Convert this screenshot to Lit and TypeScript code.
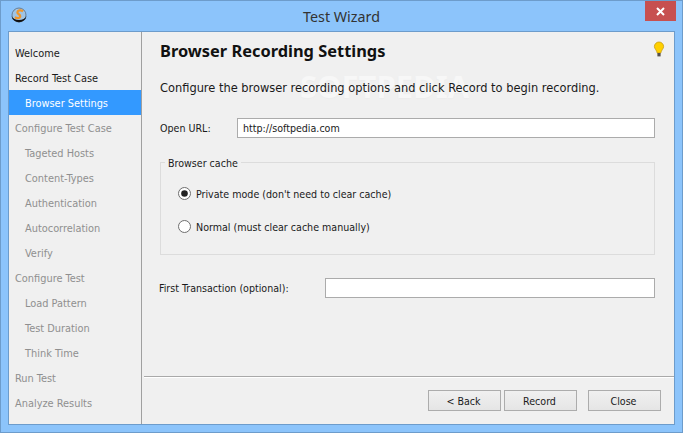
import { LitElement, html, css } from "lit";
import { customElement } from "lit/decorators.js";

const NAV: [string, number, string][] = [
  ["Welcome", 0, "on"], ["Record Test Case", 0, "on"], ["Browser Settings", 1, "sel"],
  ["Configure Test Case", 0, ""], ["Tageted Hosts", 1, ""], ["Content-Types", 1, ""],
  ["Authentication", 1, ""], ["Autocorrelation", 1, ""], ["Verify", 1, ""],
  ["Configure Test", 0, ""], ["Load Pattern", 1, ""], ["Test Duration", 1, ""],
  ["Think Time", 1, ""], ["Run Test", 0, ""], ["Analyze Results", 0, ""],
];

@customElement("app-root")
export class AppRoot extends LitElement {
  static styles = css`
    :host { display: block; width: 683px; height: 433px; font-family: "DejaVu Sans", sans-serif; font-stretch: condensed; font-size: 10.6px; color: #1a1a1a; }
    * { box-sizing: border-box; }
    .win { width: 683px; height: 433px; background: #8cc4fb; border: 1px solid #6d9ccb; display: flex; flex-direction: column; position: relative; }
    .title { height: 30px; flex: none; display: flex; align-items: center; justify-content: center; font-family: "Noto Sans", sans-serif; font-stretch: normal; font-size: 14.3px; color: #333; position: relative; padding-top: 1px; }
    .logo { position: absolute; left: 9px; top: 6px; }
    .close { position: absolute; right: 6px; top: 0; width: 31px; height: 20px; background: #c75050; display: flex; align-items: center; justify-content: center; }
    .client { flex: 1; margin: 0 7px 7px 7px; background: #f0f0f0; border: 1px solid #6d9ccb; display: flex; min-height: 0; }
    .side { width: 133px; flex: none; border-right: 1px solid #a0a0a0; padding-top: 8px; font-size: 10.9px; }
    .item { height: 25px; line-height: 27px; padding-left: 6px; color: #8f8f8f; white-space: nowrap; }
    .item.sub { padding-left: 16px; }
    .item.on { color: #1a1a1a; }
    .item.sel { background: #3399ff; color: #fff; }
    .main { flex: 1; display: flex; flex-direction: column; position: relative; min-width: 0; }
    .body { flex: 1; padding: 7px 19px 0 17px; display: flex; flex-direction: column; position: relative; }
    h1 { margin: 0 0 0 1px; font-family: "Noto Sans", sans-serif; font-stretch: normal; font-size: 16.4px; line-height: 24px; font-weight: 700; color: #111; }
    .bulb { position: absolute; right: 9px; top: 9px; z-index: 1; }
    .intro { margin: 16px 0 0 1px; font-size: 12.7px; line-height: 18px; color: #1a1a1a; white-space: nowrap; }
    .row { display: flex; align-items: center; height: 20px; }
    .url { margin-top: 21px; }
    .url label { width: 78px; padding-left: 1px; }
    .inp { flex: 1; height: 20px; background: #fff; border: 1px solid #ababab; padding: 0 5px; line-height: 18px; }
    fieldset { margin: 24px 0 0 1px; padding: 0; height: 93px; border: 1px solid #dcdcdc; position: relative; }
    .legend { position: absolute; left: 4px; top: -8px; background: #f0f0f0; padding: 0 3px; line-height: 16px; }
    .radios { display: flex; flex-direction: column; gap: 17px; padding: 22px 0 0 17px; }
    .radio { display: flex; align-items: center; gap: 5px; height: 16px; }
    .radio span { padding-top: 2px; }
    .first { margin-top: 23px; }
    .first label { width: 166px; }
    .wm { position: absolute; left: 158px; top: 39px; line-height: 30px; font-family: "Noto Sans", sans-serif; font-stretch: normal; font-size: 31px; font-weight: 700; color: #f7f7f7; text-shadow: 0 1px 1px #ececec; }
    .foot { height: 48px; flex: none; margin-left: 2px; border-top: 1px solid #a9a9a9; box-shadow: inset 0 1px 0 #fff; display: flex; justify-content: flex-end; align-items: flex-start; padding: 13px 13px 0 0; }
    button { width: 73px; height: 21px; font: inherit; font-stretch: condensed; color: #1a1a1a; padding: 0 2px 0 0; border: 1px solid #acacac; background: linear-gradient(#f0f0f0, #e5e5e5); margin-left: 3px; }
    button.close-btn { margin-left: 11px; }
  `;

  render() {
    return html`<div class="win">
      <div class="title">
        <svg class="logo" width="18" height="18" viewBox="0 0 18 18">
          <circle cx="9" cy="8" r="7" fill="#9fc4e4" stroke="#5e6b78" stroke-width=".8"/>
          <path d="M1.5 9 a7.6 7.6 0 0 0 15 0 a8 6 0 0 1 -15 0z" fill="#111"/>
          <path d="M13 4.2 C10.8 2.8 7.6 3.2 7.4 5.4 C7.2 7.4 10.6 7.2 10.2 9.6 C9.9 11.4 7 11.4 4.8 10.2" fill="none" stroke="#f0962a" stroke-width="2.3"/>
        </svg>
        Test Wizard
        <div class="close">
          <svg width="9" height="9" viewBox="0 0 9 9"><path d="M1 1 L8 8 M8 1 L1 8" stroke="#fff" stroke-width="2"/></svg>
        </div>
      </div>
      <div class="client">
        <div class="side">
          ${NAV.map(([t, s, c]) => html`<div class="item ${s ? "sub" : ""} ${c}">${t}</div>`)}
        </div>
        <div class="main">
          <div class="wm">SOFTPEDIA</div>
          <svg class="bulb" width="12" height="17" viewBox="0 0 12 17">
            <path d="M6 1 a4.6 4.6 0 0 1 4.6 4.6 c0 2.2 -2.4 3.6 -2.8 6.4 h-3.6 c-.4 -2.8 -2.8 -4.2 -2.8 -6.4 A4.6 4.6 0 0 1 6 1z" fill="#ffd000" stroke="#c79a10" stroke-width=".8"/>
            <rect x="4.4" y="12" width="3.2" height="3.4" fill="#55504a"/>
          </svg>
          <div class="body">
            <h1>Browser Recording Settings</h1>
            <div class="intro">Configure the browser recording options and click Record to begin recording.</div>
            <div class="row url"><label>Open URL:</label><div class="inp">http://softpedia.com</div></div>
            <fieldset>
              <div class="legend">Browser cache</div>
              <div class="radios">
                <div class="radio">
                  <svg width="13" height="13" viewBox="0 0 13 13"><circle cx="6.5" cy="6.5" r="6" fill="#fff" stroke="#6e6e6e"/><circle cx="6.5" cy="6.5" r="3.3" fill="#222"/></svg>
                  <span>Private mode (don't need to clear cache)</span>
                </div>
                <div class="radio">
                  <svg width="13" height="13" viewBox="0 0 13 13"><circle cx="6.5" cy="6.5" r="6" fill="#fff" stroke="#6e6e6e"/></svg>
                  <span>Normal (must clear cache manually)</span>
                </div>
              </div>
            </fieldset>
            <div class="row first"><label>First Transaction (optional):</label><div class="inp"></div></div>
          </div>
          <div class="foot">
            <button>&lt; Back</button><button>Record</button><button class="close-btn">Close</button>
          </div>
        </div>
      </div>
    </div>`;
  }
}
